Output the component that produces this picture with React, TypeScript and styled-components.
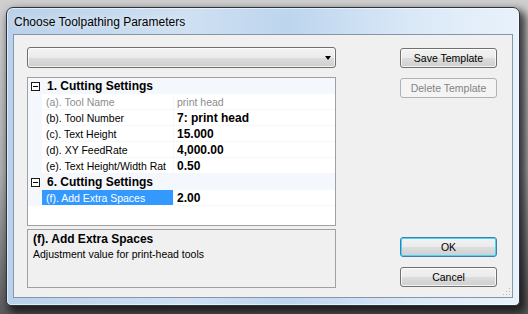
import React from "react";
import styled, { createGlobalStyle, css } from "styled-components";

const GlobalStyle = createGlobalStyle`
  html, body { margin: 0; padding: 0; }
  body {
    width: 528px;
    height: 314px;
    overflow: hidden;
    background: linear-gradient(to bottom, #cfcfcf 0%, #b0b0b0 55%, #5a5a5a 100%);
    font-family: "Liberation Sans", Arial, sans-serif;
  }
`;

const Screen = styled.div`
  width: 528px;
  height: 314px;
  box-sizing: border-box;
  padding: 7px 0 0 6px;
`;

const Window = styled.div`
  width: 514px;
  height: 299px;
  box-sizing: border-box;
  border: 1px solid #2b3440;
  border-radius: 7px 7px 5px 5px;
  background: linear-gradient(to right, #b9d1ea 0%, #cfe0f2 35%, #bdd5ee 55%, #dbe9f7 80%, #e9f2fb 100%);
  box-shadow: 4px 5px 8px 2px rgba(0, 0, 0, 0.7), inset 0 0 0 1px rgba(255, 255, 255, 0.55);
  padding: 0 6px 7px 6px;
  display: flex;
  flex-direction: column;
`;

const TitleBar = styled.div`
  height: 26px;
  display: flex;
  align-items: center;
  padding: 1px 0 0 1px;
  box-sizing: border-box;
  font-size: 12px;
  color: #000;
  text-shadow: 0 0 6px rgba(255, 255, 255, 0.9);
`;

const Client = styled.div`
  position: relative;
  flex: 1;
  border: 1px solid #8596aa;
  background: #f0f0f0;
  display: flex;
  padding: 12px 15px 9px 13px;
`;

const LeftCol = styled.div`
  width: 309px;
  display: flex;
  flex-direction: column;
`;

const RightCol = styled.div`
  margin-left: auto;
  width: 97px;
  display: flex;
  flex-direction: column;
  padding: 1px 0 1px;
`;

const Combo = styled.div`
  height: 21px;
  box-sizing: border-box;
  border: 1px solid #707070;
  border-radius: 3px;
  background: linear-gradient(to bottom, #f3f3f3 0%, #ebebeb 50%, #dddddd 51%, #cfcfcf 100%);
  box-shadow: inset 0 0 0 1px rgba(255, 255, 255, 0.7);
  display: flex;
  align-items: center;
  justify-content: flex-end;
  padding-right: 4px;
`;

const Arrow = styled.div`
  width: 0;
  height: 0;
  border-left: 3.5px solid transparent;
  border-right: 3.5px solid transparent;
  border-top: 4px solid #000;
`;

const Grid = styled.div`
  margin-top: 9px;
  height: 149px;
  box-sizing: border-box;
  border: 1px solid #a0a0a0;
  background: #fff;
  overflow: hidden;
`;

const CategoryRow = styled.div`
  height: 16px;
  background: #f4f7fc;
  display: flex;
  align-items: center;
  padding-left: 3px;
`;

const ToggleBox = styled.div`
  width: 9px;
  height: 9px;
  box-sizing: border-box;
  border: 1px solid #1a1a1a;
  background: #fff;
  display: flex;
  align-items: center;
  justify-content: center;
  margin-right: 7px;
  &::after {
    content: "";
    width: 5px;
    height: 1px;
    background: #000;
  }
`;

const CategoryText = styled.span`
  font-size: 12px;
  font-weight: bold;
  color: #000;
  line-height: 15px;
`;

const PropRow = styled.div`
  height: 16px;
  display: grid;
  grid-template-columns: 14px 131px 1px 1fr;
`;

const Margin = styled.div`
  background: #f4f7fc;
`;

const Sep = styled.div`
  background: #f4f7fc;
`;

const Cell = styled.div`
  box-sizing: border-box;
  border-bottom: 1px solid #f4f7fc;
  height: 16px;
  display: flex;
  align-items: center;
  overflow: hidden;
  white-space: nowrap;
`;

const LabelCell = styled(Cell)<{ $selected?: boolean; $disabled?: boolean }>`
  padding-left: 4px;
  font-size: 10.5px;
  color: ${(p) => (p.$selected ? "#fff" : p.$disabled ? "#8d8d8d" : "#000")};
  ${(p) =>
    p.$selected &&
    css`
      background: #3399ff;
      border-bottom-color: #fff;
    `}
`;

const ValueCell = styled(Cell)<{ $disabled?: boolean }>`
  padding-left: 3px;
  ${(p) =>
    p.$disabled
      ? css`
          font-size: 10.5px;
          color: #8d8d8d;
        `
      : css`
          font-size: 12px;
          font-weight: bold;
          color: #000;
        `}
`;

const HelpPane = styled.div`
  margin-top: 3px;
  height: 59px;
  box-sizing: border-box;
  border: 1px solid #a0a0a0;
  background: #f0f0f0;
  padding: 2px 5px;
`;

const HelpTitle = styled.div`
  font-size: 12px;
  font-weight: bold;
  line-height: 15px;
  color: #000;
`;

const HelpText = styled.div`
  font-size: 10.5px;
  line-height: 14px;
  color: #000;
`;

const Button = styled.button<{ $default?: boolean; $gapTop?: string }>`
  height: 20px;
  width: 97px;
  box-sizing: border-box;
  margin: ${(p) => p.$gapTop ?? "0"} 0 0 0;
  border: 1px solid ${(p) => (p.$default ? "#3c7fb1" : "#707070")};
  border-radius: 3px;
  background: linear-gradient(to bottom, #f2f2f2 0%, #ebebeb 50%, #dddddd 51%, #cfcfcf 100%);
  box-shadow: inset 0 0 0 1px ${(p) => (p.$default ? "#48d4fa" : "rgba(255,255,255,0.75)")};
  font-family: "Liberation Sans", Arial, sans-serif;
  font-size: 10.5px;
  color: #000;
  padding: 0;
  display: flex;
  align-items: center;
  justify-content: center;
  &:disabled {
    border-color: #adb2b5;
    background: #f4f4f4;
    box-shadow: none;
    color: #838383;
  }
`;

const Grip = styled.div`
  position: absolute;
  right: 2px;
  bottom: 2px;
  width: 8px;
  height: 8px;
  background-image: radial-gradient(circle, #b8b8b8 0.8px, transparent 1px);
  background-size: 3px 3px;
  clip-path: polygon(100% 0, 100% 100%, 0 100%);
`;

type Prop = { label: string; value: string; disabled?: boolean; selected?: boolean };
type Category = { title: string; props: Prop[] };

const data: Category[] = [
  {
    title: "1. Cutting Settings",
    props: [
      { label: "(a). Tool Name", value: "print head", disabled: true },
      { label: "(b). Tool Number", value: "7: print head" },
      { label: "(c). Text Height", value: "15.000" },
      { label: "(d). XY FeedRate", value: "4,000.00" },
      { label: "(e). Text Height/Width Rat", value: "0.50" },
    ],
  },
  {
    title: "6. Cutting Settings",
    props: [{ label: "(f). Add Extra Spaces", value: "2.00", selected: true }],
  },
];

export default function App() {
  return (
    <>
      <GlobalStyle />
      <Screen>
        <Window>
          <TitleBar>Choose Toolpathing Parameters</TitleBar>
          <Client>
            <LeftCol>
              <Combo>
                <Arrow />
              </Combo>
              <Grid>
                {data.map((cat) => (
                  <React.Fragment key={cat.title}>
                    <CategoryRow>
                      <ToggleBox />
                      <CategoryText>{cat.title}</CategoryText>
                    </CategoryRow>
                    {cat.props.map((p) => (
                      <PropRow key={p.label}>
                        <Margin />
                        <LabelCell $selected={p.selected} $disabled={p.disabled}>
                          {p.label}
                        </LabelCell>
                        <Sep />
                        <ValueCell $disabled={p.disabled}>{p.value}</ValueCell>
                      </PropRow>
                    ))}
                  </React.Fragment>
                ))}
              </Grid>
              <HelpPane>
                <HelpTitle>(f). Add Extra Spaces</HelpTitle>
                <HelpText>Adjustment value for print-head tools</HelpText>
              </HelpPane>
            </LeftCol>
            <RightCol>
              <Button>Save Template</Button>
              <Button disabled $gapTop="10px">
                Delete Template
              </Button>
              <Button $default $gapTop="auto">
                OK
              </Button>
              <Button $gapTop="10px">Cancel</Button>
            </RightCol>
            <Grip />
          </Client>
        </Window>
      </Screen>
    </>
  );
}
